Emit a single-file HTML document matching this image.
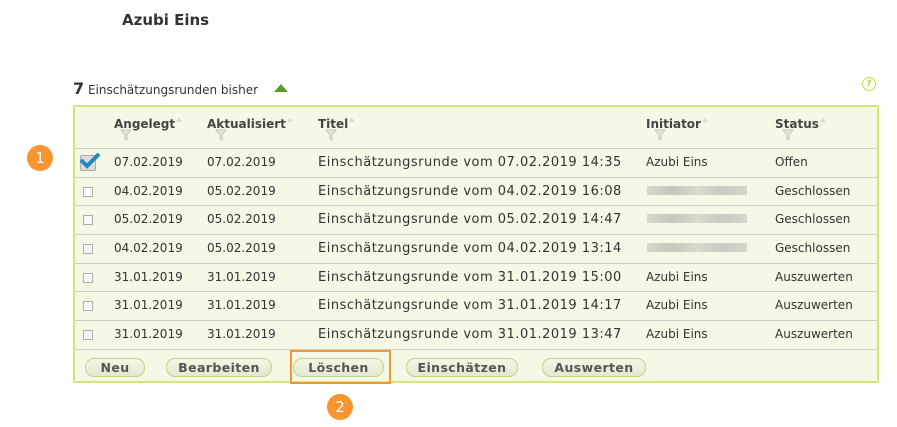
<!DOCTYPE html>
<html><head><meta charset="utf-8"><style>
body{margin:0;width:897px;height:427px;background:#fff;font-family:"DejaVu Sans",Verdana,sans-serif;color:#333;position:relative;overflow:hidden}
.a{position:absolute;white-space:nowrap}
h1{position:absolute;left:122px;top:11px;margin:0;font-size:15px;font-weight:bold;color:#333}
.box{position:absolute;left:73px;top:105px;width:802px;height:274px;border:2px solid #d3e67a;background:#f4f8e4}
.row{position:absolute;left:0;width:802px;height:28px;border-top:1px solid #c9cfc6}
.c{position:absolute;top:6px;font-size:12px;color:#333}
.t{font-size:13px;letter-spacing:.5px;top:6px}
.h{position:absolute;top:8px;font-size:12px;font-weight:bold;color:#444}
.h i{display:inline-block;width:0;height:0;border:3px solid transparent;border-bottom:4px solid #d8dcd0;margin-left:1px;vertical-align:6px}
.f{position:absolute;top:22px;width:12px;height:12px}
.cb{position:absolute;left:8px;top:9px;width:8px;height:8px;border:1px solid #aaa;background:#fafafa;border-radius:1px}
.blur{position:absolute;top:8px;height:9px;background:linear-gradient(90deg,#cfd1c4,#b8bcb4,#d4d2c4,#bcc0bc,#cdcfc4);opacity:.8}
.btn{position:absolute;top:251px;height:17px;border:1px solid #c0d58a;border-radius:9px;background:linear-gradient(#f4f7e6,#e3e8cf);font-size:12.5px;font-weight:bold;color:#555;text-align:center;line-height:17px;letter-spacing:.4px}
.badge{position:absolute;width:26px;height:26px;border-radius:13px;background:#f7962f;color:#fff;font-size:15px;text-align:center;line-height:26px}
</style></head><body>
<h1>Azubi Eins</h1>
<div class="a" style="left:73px;top:79px;font-size:12px;color:#333"><b style="font-size:16px">7</b> Einschätzungsrunden bisher</div>
<svg class="a" style="left:273px;top:83px" width="16" height="10"><path d="M1 9 L8 1 L15 9 Z" fill="#5a9a2a"/></svg>
<div class="a" style="left:862px;top:77px;width:12px;height:12px;border:1.5px solid #c8dc4a;border-radius:50%;font-size:9px;font-weight:bold;color:#b8cc30;text-align:center;line-height:12px">?</div>
<div class="badge" style="left:27px;top:145px">1</div>
<div class="badge" style="left:327px;top:394px">2</div>
<div class="box">
<svg width="0" height="0" style="position:absolute"><defs><g id="fl"><path d="M1 1 H11 L7 6 V11 L5 10 V6 Z" fill="#e4e6de" stroke="#c4c8be" stroke-width="1"/></g></defs></svg>
<div class="h" style="left:39px">Angelegt<i></i></div><svg class="f" style="left:45px"><use href="#fl"/></svg>
<div class="h" style="left:132px">Aktualisiert<i></i></div><svg class="f" style="left:140px"><use href="#fl"/></svg>
<div class="h" style="left:243px">Titel<i></i></div><svg class="f" style="left:250px"><use href="#fl"/></svg>
<div class="h" style="left:571px">Initiator<i></i></div><svg class="f" style="left:579px"><use href="#fl"/></svg>
<div class="h" style="left:700px">Status<i></i></div><svg class="f" style="left:707px"><use href="#fl"/></svg>

<div class="row" style="top:41px"><div style="position:absolute;left:5px;top:6px;width:14px;height:14px;border:1px solid #aaa;background:#ddd;border-radius:2px"></div><svg style="position:absolute;left:4px;top:2px" width="22" height="19"><path d="M2 9 L8 15 L20 3" fill="none" stroke="#1a8ac0" stroke-width="4"/></svg><span class="c" style="left:39px">07.02.2019</span><span class="c" style="left:132px">07.02.2019</span><span class="c t" style="left:243px">Einschätzungsrunde vom 07.02.2019 14:35</span><span class="c" style="left:571px">Azubi Eins</span><span class="c" style="left:700px">Offen</span></div>
<div class="row" style="top:70px"><div class="cb"></div><span class="c" style="left:39px">04.02.2019</span><span class="c" style="left:132px">05.02.2019</span><span class="c t" style="left:243px">Einschätzungsrunde vom 04.02.2019 16:08</span><div class="blur" style="left:572px;width:100px"></div><span class="c" style="left:700px">Geschlossen</span></div>
<div class="row" style="top:98px"><div class="cb"></div><span class="c" style="left:39px">05.02.2019</span><span class="c" style="left:132px">05.02.2019</span><span class="c t" style="left:243px">Einschätzungsrunde vom 05.02.2019 14:47</span><div class="blur" style="left:572px;width:100px"></div><span class="c" style="left:700px">Geschlossen</span></div>
<div class="row" style="top:127px"><div class="cb"></div><span class="c" style="left:39px">04.02.2019</span><span class="c" style="left:132px">05.02.2019</span><span class="c t" style="left:243px">Einschätzungsrunde vom 04.02.2019 13:14</span><div class="blur" style="left:572px;width:100px"></div><span class="c" style="left:700px">Geschlossen</span></div>
<div class="row" style="top:156px"><div class="cb"></div><span class="c" style="left:39px">31.01.2019</span><span class="c" style="left:132px">31.01.2019</span><span class="c t" style="left:243px">Einschätzungsrunde vom 31.01.2019 15:00</span><span class="c" style="left:571px">Azubi Eins</span><span class="c" style="left:700px">Auszuwerten</span></div>
<div class="row" style="top:184px"><div class="cb"></div><span class="c" style="left:39px">31.01.2019</span><span class="c" style="left:132px">31.01.2019</span><span class="c t" style="left:243px">Einschätzungsrunde vom 31.01.2019 14:17</span><span class="c" style="left:571px">Azubi Eins</span><span class="c" style="left:700px">Auszuwerten</span></div>
<div class="row" style="top:213px"><div class="cb"></div><span class="c" style="left:39px">31.01.2019</span><span class="c" style="left:132px">31.01.2019</span><span class="c t" style="left:243px">Einschätzungsrunde vom 31.01.2019 13:47</span><span class="c" style="left:571px">Azubi Eins</span><span class="c" style="left:700px">Auszuwerten</span></div>
<div class="row" style="top:242px;height:0"></div>
<div class="btn" style="left:10px;width:58px">Neu</div>
<div class="btn" style="left:91px;width:104px">Bearbeiten</div>
<div class="btn" style="left:218px;width:89px">Löschen</div>
<div class="btn" style="left:331px;width:110px">Einschätzen</div>
<div class="btn" style="left:467px;width:102px">Auswerten</div>
</div>
<div class="a" style="left:290px;top:350px;width:97px;height:30px;border:2px solid #f7962f"></div>
</body></html>
